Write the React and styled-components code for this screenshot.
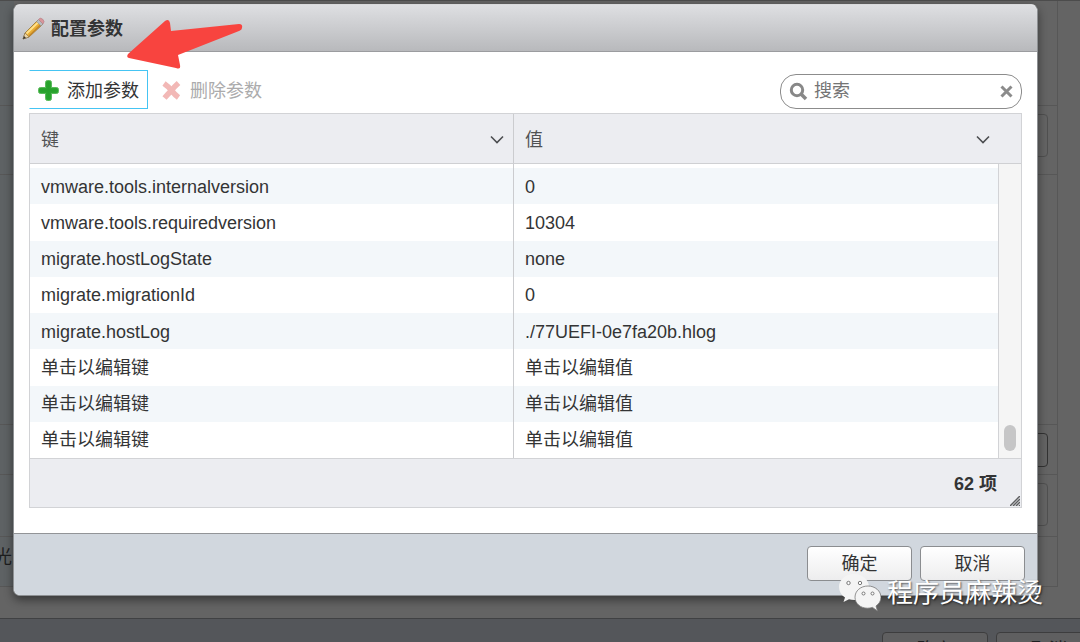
import React from "react";
import styled, { createGlobalStyle } from "styled-components";

const sans = `"Liberation Sans", "Noto Sans CJK SC", sans-serif`;

const GlobalStyle = createGlobalStyle`
  * { box-sizing: border-box; }
  body {
    margin: 0;
    overflow: hidden;
    background: #646464;
    color: #333435;
    font: 18px/24px ${sans};
  }
  button, input { font: inherit; color: inherit; }
`;

const Stage = styled.div`
  position: relative;
  height: 100vh;
  overflow: hidden;
`;

const Behind = styled.div`
  display: flex;
  flex-direction: column;
  border-top: 1px solid #4c4c4c;
`;

const BehindForm = styled.div`
  margin-right: 22px;
  margin-bottom: 31px;
  border-right: 1px solid #575757;
`;

const BehindRow = styled.div`
  display: flex;
  justify-content: space-between;
  height: ${(p) => p.$height}px;
  padding: 8px 9px 0 0;
  border-bottom: 1px solid #575757;
  background: linear-gradient(90deg, #5e6264 0 14px, #646464 14px);
  color: #1d1e1f;
`;

const BehindLabel = styled.span`
  margin-left: -6px;
`;

const BehindField = styled.div`
  width: 60px;
  height: ${(p) => p.$height}px;
  margin-left: auto;
  border: 1px solid ${(p) => (p.$strong ? "#333" : "#505050")};
  border-radius: 4px;
`;

const BehindFooter = styled.div`
  display: flex;
  justify-content: flex-end;
  gap: 8px;
  height: 60px;
  margin-right: -22px;
  padding: 13px 0 0;
  border-top: 1px solid #404143;
  background: #54565a;
`;

const BehindButton = styled.div`
  width: 106px;
  height: 36px;
  border: 1px solid #3d3d3e;
  border-radius: 4px;
  background: #5f5f60;
  color: #1d1e1f;
  line-height: 34px;
  text-align: center;
`;

const Dialog = styled.section`
  position: absolute;
  top: 4px;
  left: 13px;
  right: 42px;
  border: 1px solid #8d9093;
  border-top-color: #d9dadc;
  border-radius: 7px;
  overflow: hidden;
  background: #fff;
  box-shadow: 0 4px 10px rgba(0, 0, 0, 0.45);
`;

const DialogHeader = styled.header`
  display: flex;
  align-items: center;
  gap: 6px;
  height: 47px;
  padding: 2px 0 0 8px;
  border-bottom: 1px solid #9b9c9f;
  background: linear-gradient(#dedfe2, #b8b9bc);
`;

const Title = styled.h1`
  margin: 0;
  font-size: 18px;
  line-height: 24px;
  font-weight: 700;
`;

const DialogBody = styled.div`
  padding: 18px 15px 25px;
`;

const Toolbar = styled.div`
  display: flex;
  align-items: center;
  gap: 4px;
  margin-bottom: 4px;
`;

const ToolButton = styled.button`
  display: flex;
  align-items: center;
  gap: 7px;
  height: 39px;
  padding: 2px 8px 0 7px;
  border: 1px solid ${(p) => (p.$active ? "#45c4f3" : "transparent")};
  border-left-color: transparent;
  background: transparent;
  white-space: nowrap;

  &:disabled { color: #ababac; }
`;

const SearchBox = styled.label`
  display: flex;
  align-items: center;
  gap: 6px;
  width: 242px;
  height: 35px;
  margin: 3px 0 0 auto;
  padding: 0 8px;
  border: 1px solid #8c8c8c;
  border-radius: 16px;
  background: #fff;
`;

const SearchInput = styled.input`
  flex: 1;
  min-width: 0;
  padding: 0;
  border: 0;
  outline: 0;
  background: transparent;

  &::placeholder { color: #747474; opacity: 1; }
`;

const ClearButton = styled.button`
  display: flex;
  padding: 0;
  border: 0;
  background: transparent;
`;

const Grid = styled.div`
  border: 1px solid #d2d3d6;
`;

const GridMain = styled.div`
  display: flex;
`;

const ParamTable = styled.table`
  flex: 1;
  width: 100%;
  min-width: 0;
  height: 344px;
  table-layout: fixed;
  border-collapse: separate;
  border-spacing: 0;
`;

const HeadCell = styled.th`
  height: 50px;
  padding: 2px ${(p) => (p.$last ? 8 : 9)}px 0 11px;
  border-right: ${(p) => (p.$last ? "0" : "1px solid #cbcccf")};
  border-bottom: 1px solid #cfd0d3;
  background: #ecedf1;
  color: #505254;
  font-weight: 400;
  text-align: left;
`;

const HeadContent = styled.div`
  display: flex;
  align-items: center;
  justify-content: space-between;
`;

const SpacerCell = styled.td`
  height: 4px;
  padding: 0;
  border-right: ${(p) => (p.$last ? "0" : "1px solid #cbcccf")};
`;

const BodyRow = styled.tr`
  background: ${(p) => (p.$striped ? "#f3f7fa" : "#fff")};
`;

const Cell = styled.td`
  padding: 1px 11px 0;
  border-right: ${(p) => (p.$last ? "0" : "1px solid #cbcccf")};
`;

const ScrollColumn = styled.div`
  flex: none;
  display: flex;
  flex-direction: column;
  width: 23px;
`;

const ScrollCap = styled.div`
  height: 50px;
  border-bottom: 1px solid #cfd0d3;
  background: #ecedf1;
`;

const ScrollTrack = styled.div`
  flex: 1;
  display: flex;
  align-items: flex-end;
  justify-content: center;
  padding-bottom: 7px;
  border-left: 1px solid #d2d3d6;
  background: #f5f5f5;
`;

const ScrollThumb = styled.div`
  width: 12px;
  height: 26px;
  border-radius: 6px;
  background: #c6c6c7;
`;

const GridFooter = styled.footer`
  display: flex;
  justify-content: flex-end;
  align-items: center;
  height: 49px;
  padding-top: 2px;
  border-top: 1px solid #d2d3d6;
  background: #ecedf1;
  font-weight: 700;
`;

const ResizeGrip = styled.svg`
  align-self: flex-end;
  margin: 0 1px 1px 13px;
`;

const DialogFooter = styled.footer`
  display: flex;
  justify-content: flex-end;
  gap: 8px;
  height: 62px;
  padding: 12px 12px 0;
  border-top: 1px solid #929497;
  background: #d1d7de;
`;

const FooterButton = styled.button`
  width: 105px;
  height: 35px;
  padding: 0;
  border: 1px solid #8b8d90;
  border-radius: 4px;
  background: linear-gradient(#fff, #ededee);
`;

const Arrow = styled.svg`
  position: absolute;
  top: 18px;
  left: 126px;
`;

const Watermark = styled.div`
  position: absolute;
  right: 37px;
  bottom: 30px;
  display: flex;
  align-items: center;
  gap: 6px;
  color: #fff;
  font-size: 26px;
  line-height: 36px;
  text-shadow: 1px 1px 2px rgba(0, 0, 0, 0.6);
`;

const PencilIcon = () => (
  <svg width="23" height="24" viewBox="0 0 23 24" aria-hidden="true">
    <path d="M1 22 L3 16 L16 3 L20.500 7.500 L7 20 Z" fill="#e9ae35" stroke="#8d6a2a" strokeWidth=".7" />
    <path d="M4.500 16.500 L16.500 5" stroke="#ffe08a" strokeWidth="1.800" />
    <path d="M7 19 L19 7.500" stroke="#c1852a" strokeWidth="1.300" />
    <path d="M1 22 L3 16 L7 20 Z" fill="#ecd5a6" stroke="#75624a" strokeWidth=".5" />
    <path d="M1 22 L2 19 L4 21 Z" fill="#333" />
    <path d="M14.500 4.500 L16.500 2.500 L21 7 L19 9 Z" fill="#b7bbc0" stroke="#888" strokeWidth=".5" />
    <path d="M16.500 2.500 Q18 0 20.500 2 Q23.500 4.500 21 7 Z" fill="#d9969b" stroke="#ab7b80" strokeWidth=".5" />
  </svg>
);

const PlusIcon = () => (
  <svg width="23" height="23" viewBox="0 0 23 23" aria-hidden="true">
    <path d="M10.500 1.500 h2 q2 0 2 2 V8.500 h5 q2 0 2 2 v2 q0 2 -2 2 H14.500 v5 q0 2 -2 2 H10.500 q-2 0 -2 -2 v-5 H3.500 q-2 0 -2 -2 v-2 q0 -2 2 -2 H8.500 V3.500 q0 -2 2 -2Z" fill="#2ba52f" stroke="#5aba5c" />
    <path d="M11.500 3.500 V19.500 M3.500 11.500 H19.500" stroke="#27a02c" strokeWidth="2" />
  </svg>
);

const DeleteIcon = () => (
  <svg width="23" height="23" viewBox="0 0 23 23" aria-hidden="true">
    <path d="M4 4.500 Q9 8 11.500 11.500 Q15 16 18.500 18.500 M18.500 4 Q14 8 11.500 11.500 Q8 15 4.500 19" fill="none" stroke="#f2b8b6" strokeWidth="5.500" />
  </svg>
);

const SearchIcon = () => (
  <svg width="19" height="19" viewBox="0 0 19 19" aria-hidden="true">
    <circle cx="8" cy="8" r="5.700" fill="none" stroke="#888" strokeWidth="3" />
    <path d="M12 12 L17 17" stroke="#888" strokeWidth="3.500" />
  </svg>
);

const ClearIcon = () => (
  <svg width="13" height="13" viewBox="0 0 13 13" aria-hidden="true">
    <path d="M1.500 1.500 L11.500 11.500 M11.500 1.500 L1.500 11.500" stroke="#8b8b8b" strokeWidth="3" />
  </svg>
);

const Chevron = () => (
  <svg width="14" height="10" viewBox="0 0 14 10" aria-hidden="true">
    <path d="M1 1.500 L7 7.500 L13 1.500" fill="none" stroke="#4c4e51" strokeWidth="1.600" />
  </svg>
);

const WechatIcon = () => (
  <svg width="42" height="38" viewBox="0 0 42 38" aria-hidden="true">
    <path d="M15 0 C6.500 0 0 5.800 0 13 C0 17.200 2.300 21 6 23.500 L4.500 28 L10 25.200 Q12.500 26 15.500 26 C24 26 30 20.500 30 13 C30 5.800 23.500 0 15 0Z" fill="#f4f4f4" />
    <path d="M29 12 C21.500 12 16 17 16 23.200 C16 29.500 21.500 34.200 28.500 34.200 Q31 34.200 33.500 33.400 L38.500 37 L37 32 C40 29.900 42 26.800 42 23.300 C42 17 36 12 29 12Z" fill="#f4f4f4" stroke="#777" strokeWidth=".8" />
    <g fill="#fff" stroke="#777" strokeWidth="1">
      <circle cx="9.500" cy="9" r="1.700" />
      <circle cx="21" cy="9" r="1.700" />
      <circle cx="24.500" cy="19.500" r="1.500" />
      <circle cx="33.500" cy="19.500" r="1.500" />
    </g>
  </svg>
);

const rows = [
  ["vmware.tools.internalversion", "0"],
  ["vmware.tools.requiredversion", "10304"],
  ["migrate.hostLogState", "none"],
  ["migrate.migrationId", "0"],
  ["migrate.hostLog", "./77UEFI-0e7fa20b.hlog"],
  ["单击以编辑键", "单击以编辑值"],
  ["单击以编辑键", "单击以编辑值"],
  ["单击以编辑键", "单击以编辑值"],
];

export default function App() {
  return (
    <Stage>
      <GlobalStyle />
      <Behind>
        <BehindForm>
          <BehindRow $height={105} />
          <BehindRow $height={69}>
            <BehindField $height={43} />
          </BehindRow>
          <BehindRow $height={250} />
          <BehindRow $height={50}>
            <BehindField $height={34} $strong />
          </BehindRow>
          <BehindRow $height={62}>
            <BehindField $height={43} />
          </BehindRow>
          <BehindRow $height={50}>
            <BehindLabel>光</BehindLabel>
          </BehindRow>
        </BehindForm>
        <BehindFooter>
          <BehindButton>确定</BehindButton>
          <BehindButton>取消</BehindButton>
        </BehindFooter>
      </Behind>

      <Dialog role="dialog" aria-labelledby="dialog-title">
        <DialogHeader>
          <PencilIcon />
          <Title id="dialog-title">配置参数</Title>
        </DialogHeader>
        <DialogBody>
          <Toolbar>
            <ToolButton type="button" $active>
              <PlusIcon />
              添加参数
            </ToolButton>
            <ToolButton type="button" disabled>
              <DeleteIcon />
              删除参数
            </ToolButton>
            <SearchBox>
              <SearchIcon />
              <SearchInput type="text" placeholder="搜索" aria-label="搜索" />
              <ClearButton type="button" aria-label="清除">
                <ClearIcon />
              </ClearButton>
            </SearchBox>
          </Toolbar>
          <Grid>
            <GridMain>
              <ParamTable>
                <thead>
                  <tr>
                    <HeadCell scope="col">
                      <HeadContent>键<Chevron /></HeadContent>
                    </HeadCell>
                    <HeadCell scope="col" $last>
                      <HeadContent>值<Chevron /></HeadContent>
                    </HeadCell>
                  </tr>
                </thead>
                <tbody>
                  <tr aria-hidden="true">
                    <SpacerCell />
                    <SpacerCell $last />
                  </tr>
                  {rows.map(([key, value], i) => (
                    <BodyRow key={i} $striped={i % 2 === 0}>
                      <Cell>{key}</Cell>
                      <Cell $last>{value}</Cell>
                    </BodyRow>
                  ))}
                </tbody>
              </ParamTable>
              <ScrollColumn>
                <ScrollCap />
                <ScrollTrack>
                  <ScrollThumb />
                </ScrollTrack>
              </ScrollColumn>
            </GridMain>
            <GridFooter>
              62 项
              <ResizeGrip width="10" height="10" viewBox="0 0 10 10" aria-hidden="true">
                <path d="M0 10 L10 0 M3 10 L10 3 M6 10 L10 6 M9 10 L10 9" stroke="#5d5e60" strokeWidth="1.500" />
              </ResizeGrip>
            </GridFooter>
          </Grid>
        </DialogBody>
        <DialogFooter>
          <FooterButton type="button">确定</FooterButton>
          <FooterButton type="button">取消</FooterButton>
        </DialogFooter>
      </Dialog>

      <Arrow width="118" height="52" viewBox="0 0 118 52" aria-hidden="true">
        <path d="M2 36 L39 3 Q43 0 44 5 L45 13 L113 6 Q117 6 116 10 Q116 12 113 13 L52 37 L54 47 Q55 52 50 50 L3 40 Q0 39 2 36Z" fill="#f8443f" />
      </Arrow>
      <Watermark>
        <WechatIcon />
        程序员麻辣烫
      </Watermark>
    </Stage>
  );
}
